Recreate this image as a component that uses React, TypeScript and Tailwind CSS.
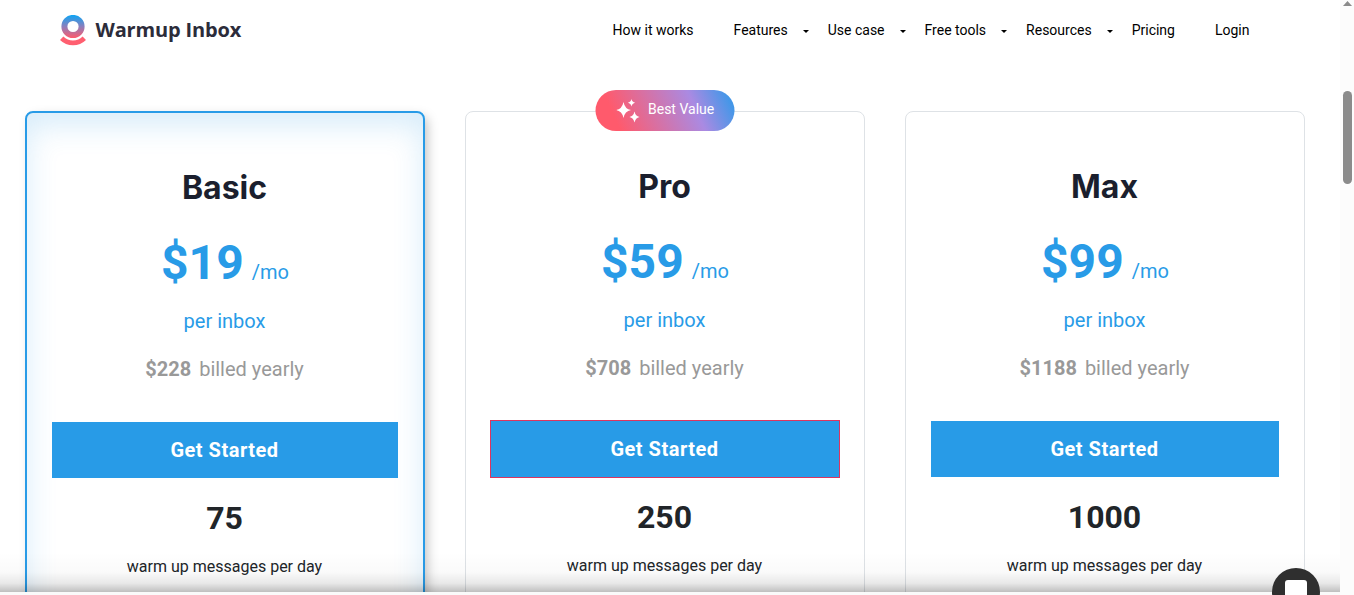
interface Plan {
  name: string;
  price: string;
  yearly: string;
  messages: string;
  featured?: boolean;
  bestValue?: boolean;
}

interface NavItem {
  label: string;
  menu?: boolean;
}

const plans: Plan[] = [
  { name: 'Basic', price: '$19', yearly: '$228', messages: '75', featured: true },
  { name: 'Pro', price: '$59', yearly: '$708', messages: '250', bestValue: true },
  { name: 'Max', price: '$99', yearly: '$1188', messages: '1000' },
];

const navItems: NavItem[] = [
  { label: 'How it works' },
  { label: 'Features', menu: true },
  { label: 'Use case', menu: true },
  { label: 'Free tools', menu: true },
  { label: 'Resources', menu: true },
  { label: 'Pricing' },
  { label: 'Login' },
];

const Logo = () => (
  <a className="flex items-center">
    <svg width="26" height="31" viewBox="0 0 26 31" fill="none">
      <defs>
        <linearGradient id="logo-ring" x1="13" y1="0" x2="13" y2="23" gradientUnits="userSpaceOnUse">
          <stop stopColor="#0ca5f5" />
          <stop offset="0.5" stopColor="#8b7fbd" />
          <stop offset="1" stopColor="#ff5a6c" />
        </linearGradient>
      </defs>
      <circle cx="13" cy="11.5" r="8.6" stroke="url(#logo-ring)" strokeWidth="6" />
      <path d="M1.7 23.2C8 29.400 18 29.400 24.300 23.200" stroke="#ff5f70" strokeWidth="4.800" />
    </svg>
    <span className="ml-[9.5px] font-['Open_Sans',sans-serif] text-[20px] leading-[30px] font-bold tracking-[-0.15px] whitespace-nowrap text-[#2c2c3a]">
      Warmup Inbox
    </span>
  </a>
);

const Header = () => (
  <header className="flex h-[60px] w-[1340px] items-center justify-between pr-[90.5px] pl-[60px]">
    <Logo />
    <nav className="flex items-center text-sm text-black">
      {navItems.map((item, i) => (
        <a key={item.label} className={i === navItems.length - 1 ? 'flex items-center' : item.menu ? 'flex items-center pr-[19px]' : 'flex items-center pr-10'}>
          {item.label}
          {item.menu && (
            <svg className="mt-[3px] ml-[15px]" width="6" height="3" viewBox="0 0 6 3">
              <path d="M0 0h6L3 3z" fill="#000" />
            </svg>
          )}
        </a>
      ))}
    </nav>
  </header>
);

const BestValue = () => (
  <div className="absolute -top-[22px] left-1/2 flex h-[41px] w-[139px] -translate-x-1/2 items-center rounded-full bg-[linear-gradient(66deg,#ff5a6c_16%,#aa8ae2_70%,#4497e8_94%)] pl-[21px] text-sm text-white">
    <svg width="24" height="24" viewBox="0 0 24 24" fill="#fff">
      <path d="M7 3Q8.300 10 14.500 11Q8.300 12 7 19Q5.700 12 -0.500 11Q5.700 10 7 3Z" />
      <path d="M15 0Q15.700 3.300 18.700 3.800Q15.700 4.300 15 7.600Q14.300 4.300 11.300 3.800Q14.300 3.300 15 0Z" />
      <path d="M18 12.500Q19 17.100 23 18Q19 18.900 18 23.500Q17 18.900 13 18Q17 17.100 18 12.500Z" />
    </svg>
    <span className="-mt-[3px] ml-[7.5px]">Best Value</span>
  </div>
);

const PlanCard = ({ plan }: { plan: Plan }) => (
  <article
    className={
      plan.featured
        ? 'h-[540px] w-[400px] rounded-lg border-2 border-[#289be7] px-[25px] text-center shadow-[4px_4px_12px_-2px_rgba(0,0,0,0.26),inset_0_12px_30px_rgba(40,155,231,0.19)]'
        : 'relative h-[540px] w-[400px] rounded-lg border border-[#dee2e6] px-[25px] text-center'
    }
  >
    {plan.bestValue && <BestValue />}
    <h2 className="mt-[55px] mr-px font-['Inter',sans-serif] text-[32px] leading-10 font-bold text-[#1b1f2e]">{plan.name}</h2>
    <p className="mt-[23px] flex h-16 items-baseline justify-center leading-[64px] text-[#289be7]">
      <span className="text-5xl leading-[64px] font-bold">{plan.price}</span>
      <span className="ml-2 text-xl">/mo</span>
    </p>
    <p className="mt-[11px] mr-px text-xl leading-[30px] text-[#289be7]">per inbox</p>
    <p className="mt-[18px] mr-px text-xl leading-[30px] text-[#999]">
      <b className="mr-2 font-bold">{plan.yearly}</b>billed yearly
    </p>
    <button
      className={
        plan.bestValue
          ? '-ml-px mt-[37px] block h-[58px] w-[350px] border border-[#dc3560] bg-[#289be7] text-xl font-bold tracking-[0.5px] text-white'
          : 'mt-[38px] block h-14 w-full bg-[#289be7] text-xl font-bold tracking-[0.5px] text-white'
      }
    >
      <span className="mr-px">Get Started</span>
    </button>
    <p className={plan.bestValue ? 'mt-[19px] mr-px text-[32px] leading-10 font-bold text-[#212529]' : 'mt-5 mr-px text-[32px] leading-10 font-bold text-[#212529]'}>
      {plan.messages}
    </p>
    <p className="mt-[17px] mr-px text-base leading-6 text-[#212529]">warm up messages per day</p>
  </article>
);

const Scrollbar = () => (
  <div className="absolute top-0 right-0 flex h-[595px] w-[14px] flex-col items-center bg-[#fcfcfc]">
    <svg className="mt-px" width="9" height="5" viewBox="0 0 9 5">
      <path d="M4.500 0L9 5H0z" fill="#8b8b8b" />
    </svg>
    <div className="mt-[85px] h-[93px] w-[9px] rounded-full bg-[#8b8b8b]" />
  </div>
);

const ChatButton = () => (
  <div className="absolute top-[568px] left-[1272px] flex h-12 w-12 justify-center rounded-full bg-[#2f2f2f] pt-3">
    <div className="h-6 w-[22px] rounded-[3px] bg-white" />
  </div>
);

export default function App() {
  return (
    <div className="relative h-[595px] w-[1354px] overflow-hidden bg-white font-['Roboto',sans-serif]">
      <Header />
      <main className="mt-[51px] flex gap-10 pl-[25px]">
        {plans.map((plan) => (
          <PlanCard key={plan.name} plan={plan} />
        ))}
      </main>
      <div className="absolute top-[552px] left-0 h-10 w-[1340px] bg-[linear-gradient(to_bottom,transparent,rgba(0,0,0,0.02)_50%,rgba(0,0,0,0.09)_78%,rgba(0,0,0,0.25))]" />
      <div className="absolute top-[592px] left-0 h-[3px] w-[1340px] bg-[#fafafa]" />
      <Scrollbar />
      <ChatButton />
    </div>
  );
}
